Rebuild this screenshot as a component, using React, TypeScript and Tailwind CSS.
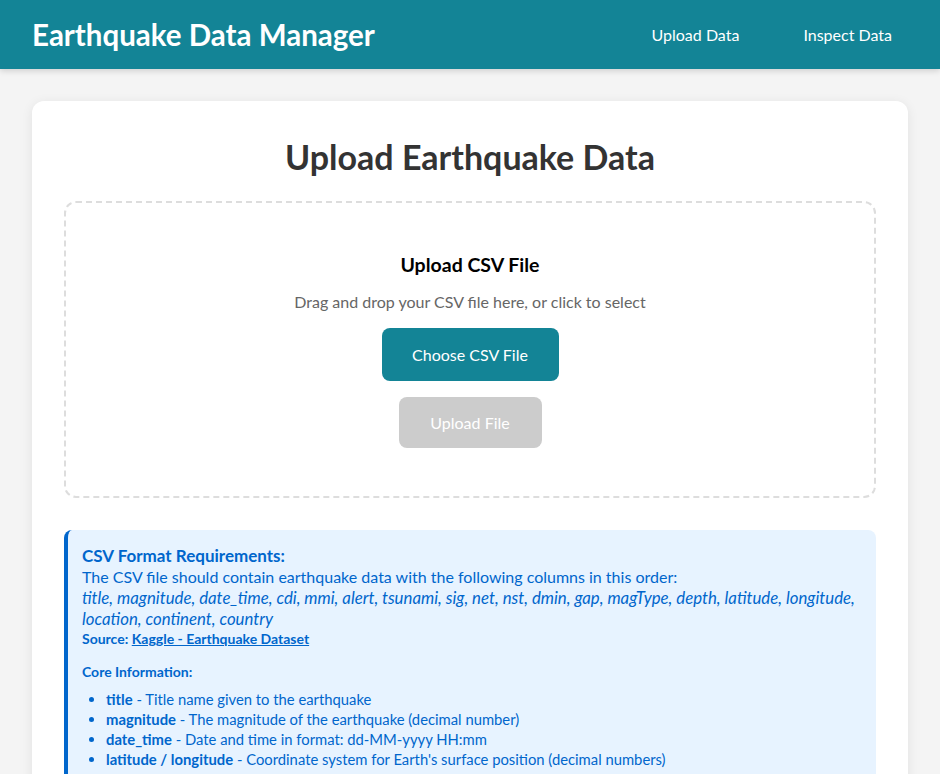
import { useRef, useState } from "react";

const coreFields = [
    { name: "title", desc: "Title name given to the earthquake" },
    { name: "magnitude", desc: "The magnitude of the earthquake (decimal number)" },
    { name: "date_time", desc: "Date and time in format: dd-MM-yyyy HH:mm" },
    { name: "latitude / longitude", desc: "Coordinate system for Earth's surface position (decimal numbers)" },
];

function Header() {
    return (
        <header className="h-[69px] bg-[#138496] flex items-center justify-between px-8 shadow-[0_2px_6px_rgba(0,0,0,0.15)] relative z-10">
            <h1 className="text-[29.5px] leading-[40px] font-bold text-white">Earthquake Data Manager</h1>
            <nav className="flex gap-8">
                <a href="#" className="px-4 text-white text-base">Upload Data</a>
                <a href="#" className="px-4 text-white text-base">Inspect Data</a>
            </nav>
        </header>
    );
}

function App() {
    const [file, setFile] = useState<File | null>(null);
    const inputRef = useRef<HTMLInputElement>(null);

    return (
        <div className="min-h-screen bg-[#f4f4f4] font-['Lato',sans-serif]">
            <Header />
            <main className="px-8 pt-8">
                <div className="bg-white rounded-xl shadow-[0_2px_12px_rgba(0,0,0,0.08)] p-8">
                    <h2 className="text-[34px] leading-[48px] font-bold text-[#333] text-center mb-5">Upload Earthquake Data</h2>

                    <div className="border-2 border-dashed border-[#ddd] rounded-xl py-12 flex flex-col items-center">
                        <h3 className="text-[19.5px] font-bold text-black leading-[27px]">Upload CSV File</h3>
                        <p className="text-[#666] text-base mt-3 leading-6">Drag and drop your CSV file here, or click to select</p>
                        <input ref={inputRef} type="file" accept=".csv" className="hidden" onChange={(e) => setFile(e.target.files?.[0] ?? null)} />
                        <button type="button" onClick={() => inputRef.current?.click()} className="mt-[14px] h-[53px] w-[177px] rounded-lg bg-[#138496] text-white text-base">
                            Choose CSV File
                        </button>
                        <button type="button" disabled={!file} className="mt-4 h-[51px] w-[143px] rounded-lg bg-[#ccc] text-white text-base">
                            Upload File
                        </button>
                    </div>

                    <div className="mt-8 bg-[#e7f3ff] border-l-4 border-[#0066cc] rounded-lg pl-[14px] pr-5 pt-[15px] pb-4 text-[#0066cc]">
                        <div className="leading-[21px]">
                            <strong className="block text-[17px]">CSV Format Requirements:</strong>
                            <span className="block">The CSV file should contain earthquake data with the following columns in this order:</span>
                            <em className="block text-[16.8px]">
                                title, magnitude, date_time, cdi, mmi, alert, tsunami, sig, net, nst, dmin, gap, magType, depth, latitude, longitude,
                                <br />
                                location, continent, country
                            </em>
                        </div>
                        <p className="text-sm font-bold leading-[19px]">
                            Source: <a href="#" className="underline">Kaggle - Earthquake Dataset</a>
                        </p>
                        <h4 className="text-sm font-bold mt-[14px] leading-[19px]">Core Information:</h4>
                        <ul className="list-disc pl-6 mt-2 text-[14.8px] leading-5">
                            {coreFields.map((f) => (
                                <li key={f.name}>
                                    <strong>{f.name}</strong> - {f.desc}
                                </li>
                            ))}
                        </ul>
                    </div>
                </div>
            </main>
        </div>
    );
}

export default App;
